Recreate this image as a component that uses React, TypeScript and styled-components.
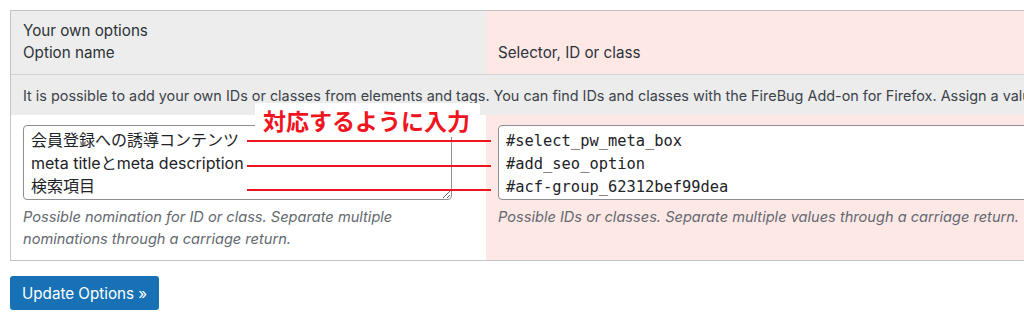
import React from "react"
import styled, { createGlobalStyle } from "styled-components"

const GlobalStyle = createGlobalStyle`
    html, body {
        margin: 0;
        padding: 0;
        background: #fff;
        overflow: hidden;
    }
    body {
        font-family: Inter, "Noto Sans CJK JP", sans-serif;
        color: #1d2327;
    }
`

const Page = styled.div`
    padding: 10px;
    width: 1200px;
`

const OptionsTable = styled.div`
    position: relative;
    border: 1px solid #c3c4c7;
    border-right: none;
`

const SplitRow = styled.div<{ $bordered?: boolean }>`
    display: grid;
    grid-template-columns: 475px 1fr;
    border-bottom: ${(p) => (p.$bordered ? "1px solid #d3d3d5" : "none")};
`

const Cell = styled.div<{ $tone: "gray" | "pink" | "white" }>`
    box-sizing: border-box;
    padding: 9px 12px 0 12px;
    background: ${(p) => (p.$tone === "gray" ? "#ededed" : p.$tone === "pink" ? "#fde8e6" : "#fff")};
`

const HeadCell = styled(Cell)`
    height: 63px;
    font-size: 15.2px;
    line-height: 22px;
    color: #2c3338;
    display: flex;
    flex-direction: column;
    justify-content: flex-start;
`

const HeadLabelLow = styled.div`
    margin-top: 22px;
`

const DescRow = styled.div`
    height: 40px;
    line-height: 42px;
    padding: 0 12px;
    background: #ececec;
    font-size: 14.4px;
    color: #3c434a;
    white-space: nowrap;
`

const BodyCell = styled(Cell)`
    height: 145px;
    padding-top: 10px;
`

const Field = styled.textarea<{ $mono?: boolean }>`
    display: block;
    box-sizing: border-box;
    width: ${(p) => (p.$mono ? "600px" : "429px")};
    height: 75px;
    margin: 0;
    padding: ${(p) => (p.$mono ? "4px 7px" : "3px 7px")};
    border: 1px solid #8c8f94;
    border-radius: 4px;
    background: #fff;
    color: #1d2327;
    font-family: ${(p) =>
        p.$mono ? '"DejaVu Sans Mono", monospace' : 'Inter, "Noto Sans CJK JP", sans-serif'};
    font-size: ${(p) => (p.$mono ? "15.4px" : "16px")};
    line-height: 23px;
    overflow: hidden;
    resize: ${(p) => (p.$mono ? "none" : "vertical")};
`

const Help = styled.p`
    margin: 6px 0 0;
    font-size: 14.6px;
    line-height: 22px;
    font-style: italic;
    color: #646970;
`

const Note = styled.div`
    position: absolute;
    left: 244px;
    top: 92px;
    padding: 1px 10px 0 8px;
    height: 33px;
    background: #fff;
    color: #f0141e;
    font-family: "Noto Sans CJK JP", sans-serif;
    font-weight: 700;
    font-size: 23px;
    line-height: 33px;
`

const Pointer = styled.div<{ $top: number }>`
    position: absolute;
    left: 236px;
    top: ${(p) => p.$top}px;
    width: 244px;
    height: 2px;
    background: #f0141e;
`

const SubmitButton = styled.button`
    margin-top: 15px;
    height: 34px;
    padding: 0 12px;
    border: none;
    border-radius: 3px;
    background: #1771b4;
    color: #fff;
    font-family: Inter, sans-serif;
    font-size: 15.2px;
`

const names = ["会員登録への誘導コンテンツ", "meta titleとmeta description", "検索項目"]
const selectors = ["#select_pw_meta_box", "#add_seo_option", "#acf-group_62312bef99dea"]

export default function App() {
    return (
        <Page>
            <GlobalStyle />
            <OptionsTable>
                <SplitRow $bordered>
                    <HeadCell $tone="gray">
                        <div>Your own options</div>
                        <div>Option name</div>
                    </HeadCell>
                    <HeadCell $tone="pink">
                        <HeadLabelLow>Selector, ID or class</HeadLabelLow>
                    </HeadCell>
                </SplitRow>
                <DescRow>
                    It is possible to add your own IDs or classes from elements and tags. You can find IDs and
                    classes with the FireBug Add-on for Firefox. Assign a value to each option name.
                </DescRow>
                <SplitRow>
                    <BodyCell $tone="white">
                        <Field readOnly value={names.join("\n")} />
                        <Help>
                            Possible nomination for ID or class. Separate multiple nominations through a carriage
                            return.
                        </Help>
                    </BodyCell>
                    <BodyCell $tone="pink">
                        <Field $mono readOnly value={selectors.join("\n")} />
                        <Help>Possible IDs or classes. Separate multiple values through a carriage return.</Help>
                    </BodyCell>
                </SplitRow>
                <Note>対応するように入力</Note>
                <Pointer $top={129} />
                <Pointer $top={154} />
                <Pointer $top={178} />
            </OptionsTable>
            <SubmitButton>Update Options »</SubmitButton>
        </Page>
    )
}
